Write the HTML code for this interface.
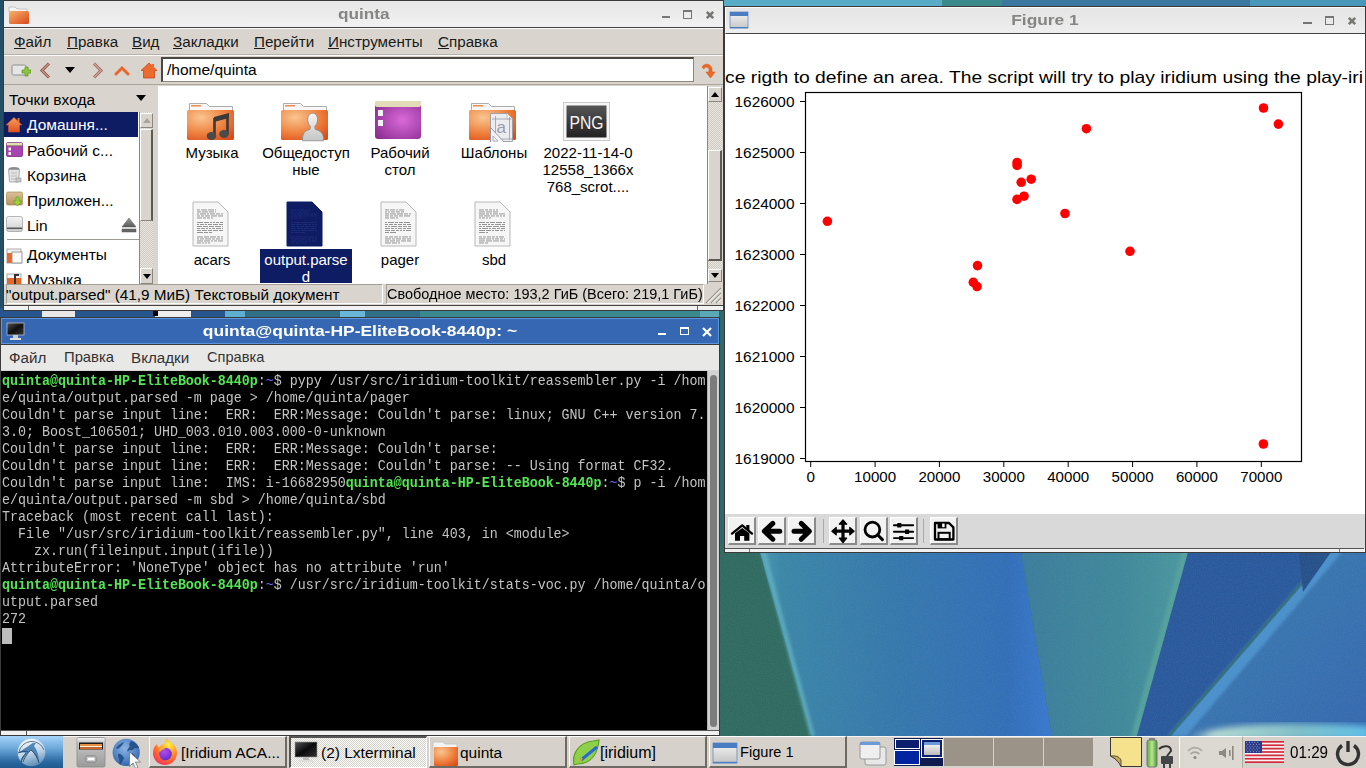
<!DOCTYPE html>
<html><head><meta charset="utf-8">
<style>
*{margin:0;padding:0;box-sizing:border-box}
html,body{width:1366px;height:768px;overflow:hidden;background:#2d6a80;font-family:"Liberation Sans",sans-serif;font-size:13.5px;color:#000}
.a{position:absolute}
.t{position:absolute;white-space:nowrap}
#desk{left:0;top:0;width:1366px;height:768px}
/* file manager */
#fm{left:3px;top:0;width:721px;height:311px;background:#d9d5ce;border:1px solid #3a3a3a}
#fmtitle{left:0;top:0;width:719px;height:27px;background:linear-gradient(#e6e6e6,#f1f1f1);border-bottom:1px solid #404040}
.menu{font-size:15.2px;color:#1a1a1a}
.lbl{position:absolute;width:94px;text-align:center;font-size:15px;line-height:17px;white-space:nowrap}
.menu u{text-decoration:underline;text-underline-offset:1px;text-decoration-thickness:1px}
#term{left:0;top:317px;width:720px;height:419px;background:#000;border:1px solid #3a3a3a}
#fig{left:724px;top:6px;width:642px;height:547px;background:#fff;border:1px solid #3a3a3a}
#task{left:0;top:736px;width:1366px;height:32px;background:#d6d2cb}
.mono{font-family:"Liberation Mono",monospace;font-size:14.2px;line-height:17px;color:#c4c4c4;transform:scaleX(0.9390);transform-origin:0 0}
.g{color:#55e455;font-weight:bold}
.bl{color:#6f6fff}
</style></head><body>
<svg id="desk" class="a" width="1366" height="768" viewBox="0 0 1366 768">
  <defs>
    <linearGradient id="l1" x1="0" y1="0" x2="1" y2="0"><stop offset="0" stop-color="#4a9ab4"/><stop offset="0.08" stop-color="#3a86a8"/><stop offset="0.45" stop-color="#3478ac"/><stop offset="0.85" stop-color="#306eb8"/><stop offset="1" stop-color="#3878d0"/></linearGradient>
    <linearGradient id="l2" x1="0" y1="0" x2="1" y2="0"><stop offset="0" stop-color="#3a7c9c"/><stop offset="0.6" stop-color="#3e889a"/><stop offset="1" stop-color="#4a98a0"/></linearGradient>
    <linearGradient id="l4" x1="0" y1="0" x2="1" y2="1"><stop offset="0" stop-color="#3a80b0"/><stop offset="1" stop-color="#3468b0"/></linearGradient>
    <linearGradient id="pale" x1="0" y1="0" x2="1" y2="0"><stop offset="0" stop-color="#a8d0c8" stop-opacity="0"/><stop offset="0.15" stop-color="#b8dcd4"/><stop offset="0.6" stop-color="#80c0c8"/><stop offset="1" stop-color="#5cc0ea"/></linearGradient>
    <filter id="blur1"><feGaussianBlur stdDeviation="1.5"/></filter>
    <filter id="blur3"><feGaussianBlur stdDeviation="3"/></filter>
  </defs>
  <rect width="1366" height="768" fill="#2d6874"/>
  <rect x="0" y="0" width="4" height="320" fill="#244e66"/>
  <!-- mid strip -->
  <rect x="0" y="308" width="720" height="12" fill="#2f7088"/>
  <rect x="0" y="308" width="230" height="12" fill="#27568e"/>
  <rect x="225" y="308" width="20" height="12" fill="#5eaed0"/>
  <rect x="340" y="308" width="25" height="12" fill="#6ab6d8"/>
  <rect x="420" y="308" width="290" height="12" fill="#3a8890"/>
  <rect x="700" y="308" width="25" height="12" fill="#5aa8b8"/>
  <rect x="42" y="311" width="33" height="6" fill="#e8e8e8"/>
  <rect x="155" y="311" width="36" height="6" fill="#eeeeee"/>
  <rect x="153" y="311" width="5" height="5" fill="#000"/>
  <!-- between term and fig -->
  <rect x="719" y="300" width="7" height="260" fill="#2e6a6a"/>
  <!-- top strip -->
  <rect x="724" y="0" width="642" height="8" fill="#3a78a0"/>
  <rect x="724" y="0" width="218" height="8" fill="#58acc8"/>
  <rect x="942" y="0" width="60" height="8" fill="#3a8a8c"/>
  <rect x="1250" y="0" width="116" height="8" fill="#4896b8"/>
  <!-- bottom right leaves -->
  <rect x="719" y="545" width="647" height="192" fill="#2e6a60"/>
  <polygon points="758,545 1020,545 1052,736 812,736" fill="url(#l1)"/>
  <polygon points="759,545 764,545 815,736 810,736" fill="#62b4c4" opacity="0.75" filter="url(#blur1)"/>
  <polygon points="1020,545 1190,545 1137,736 1052,736" fill="url(#l2)"/>
  <polygon points="1184,545 1191,545 1138,736 1131,736" fill="#52a09c" filter="url(#blur1)"/>
  <polygon points="1190,545 1366,545 1366,736 1137,736" fill="#28589c"/>
  <polygon points="1340,545 1366,545 1366,736 1172,736" fill="url(#l4)"/>
  <polygon points="1334,545 1348,545 1186,736 1168,736" fill="#4a90cc" filter="url(#blur1)"/>
  <polygon points="1333,545 1337,545 1171,736 1167,736" fill="#2e6a70" opacity="0.8"/>
  <polygon points="1298,545 1336,545 1303,592" fill="#24508a"/>
  <g filter="url(#blur3)"><path d="M1185 738C1220 722 1300 722 1370 726V740H1185z" fill="url(#pale)"/></g>
  <filter id="noise" x="0" y="0" width="100%" height="100%"><feTurbulence type="fractalNoise" baseFrequency="0.9" numOctaves="2" seed="4"/><feColorMatrix values="0 0 0 0 0.5  0 0 0 0 0.5  0 0 0 0 0.5  0 0 0 0.9 -0.25"/></filter>
  <rect x="719" y="545" width="647" height="192" filter="url(#noise)" opacity="0.18"/>
</svg>

<!-- FILE MANAGER -->
<div id="fm" class="a">
  <div id="fmtitle" class="a">
    <svg class="a" style="left:4px;top:4px" width="22" height="20" viewBox="0 0 22 20">
      <defs><linearGradient id="fold" x1="0" y1="0" x2="1" y2="1"><stop offset="0" stop-color="#f7b26a"/><stop offset="1" stop-color="#d9481a"/></linearGradient></defs>
      <path d="M1 2 h6 l2 2 h10 v3 H1z" fill="#f4f4f4" stroke="#b9b9b9" stroke-width="0.8"/>
      <rect x="1" y="6" width="20" height="13" rx="1.5" fill="url(#fold)"/>
    </svg>
    <div class="t" style="left:334px;top:4px;font-weight:bold;font-size:15.5px;color:#858583;transform:scaleX(1.11);transform-origin:0 0">quinta</div>
    <div class="a" style="left:658px;top:15px;width:8px;height:2px;background:#767672"></div>
    <div class="a" style="left:679px;top:9px;width:9px;height:9px;border:1.5px solid #767672;border-top-width:2px"></div>
    <svg class="a" style="left:701px;top:9px" width="10" height="10"><path d="M1.8 1.8L8.2 8.2M8.2 1.8L1.8 8.2" stroke="#767672" stroke-width="2.6"/></svg>
  </div>
  <!-- menubar -->
  <div class="a" style="left:0;top:27px;width:719px;height:27px;background:#d9d5ce;border-bottom:1px solid #b8b3aa;border-top:1px solid #fbfaf9"></div>
  <div class="t menu" style="left:10px;top:32px"><u>Ф</u>айл</div>
  <div class="t menu" style="left:63px;top:32px"><u>П</u>равка</div>
  <div class="t menu" style="left:128px;top:32px"><u>В</u>ид</div>
  <div class="t menu" style="left:169px;top:32px"><u>З</u>акладки</div>
  <div class="t menu" style="left:250px;top:32px"><u>П</u>ерейти</div>
  <div class="t menu" style="left:324px;top:32px"><u>И</u>нструменты</div>
  <div class="t menu" style="left:434px;top:32px"><u>С</u>правка</div>
  <!-- toolbar -->
  <div class="a" style="left:0;top:54px;width:719px;height:30px;background:#d9d5ce;border-top:1px solid #fbfaf9;border-bottom:1px solid #aaa49b"></div>
  <svg class="a" style="left:7px;top:61px" width="20" height="18" viewBox="0 0 20 18">
    <rect x="1" y="3" width="14" height="10" rx="1.5" fill="#e6e6e6" stroke="#8e8e8e"/>
    <path d="M12 9h3V6h3v3h3v3h-3v3h-3v-3h-3z" transform="translate(-1,-1)" fill="#8cc63f" stroke="#5f9a2a" stroke-width="0.8"/>
  </svg>
  <svg class="a" style="left:35px;top:61px" width="12" height="17" viewBox="0 0 12 17"><path d="M10 1.5L3 8.5L10 15.5" fill="none" stroke="#9a5a48" stroke-width="3"/><path d="M10 1.5L3 8.5L10 15.5" fill="none" stroke="#d8c8c0" stroke-width="0.9"/></svg>
  <svg class="a" style="left:61px;top:66px" width="10" height="6"><path d="M0 0h10L5 6z" fill="#000"/></svg>
  <svg class="a" style="left:88px;top:61px" width="12" height="17" viewBox="0 0 12 17"><path d="M2 1.5L9 8.5L2 15.5" fill="none" stroke="#a87060" stroke-width="3"/><path d="M2 1.5L9 8.5L2 15.5" fill="none" stroke="#e0d4cc" stroke-width="0.9"/></svg>
  <svg class="a" style="left:110px;top:64px" width="16" height="11"><path d="M2 9L8 3L14 9" fill="none" stroke="#e8662a" stroke-width="3" stroke-linecap="round"/></svg>
  <svg class="a" style="left:136px;top:61px" width="18" height="17" viewBox="0 0 18 17"><path d="M9 1L17 8.5h-2.5V16h-11V8.5H1z" fill="#ec6a2e" stroke="#c8471a" stroke-width="0.8"/><rect x="12" y="2" width="2" height="4" fill="#ec6a2e"/></svg>
  <div class="a" style="left:157px;top:56px;width:533px;height:25px;background:#fff;border:1px solid #8d877e;border-top:2px solid #4b4741;border-left:2px solid #4b4741"></div>
  <div class="t" style="left:163px;top:60px;font-size:15.5px;color:#000">/home/quinta</div>
  <svg class="a" style="left:695px;top:61px" width="18" height="18" viewBox="0 0 18 18"><path d="M3 5C5 1 12 1 13 7L13 10L16 10L11.5 16L7 10L10 10L10 7C9.5 5 6 4 5 7z" fill="#ea6a28" stroke="#d8551c" stroke-width="0.6"/></svg>
  <!-- sidebar -->
  <div class="a" style="left:0;top:84px;width:155px;height:200px;background:#d9d5ce"></div>
  <div class="t" style="left:5px;top:90px;font-size:15.5px">Точки входа</div>
  <svg class="a" style="left:132px;top:94px" width="10" height="6"><path d="M0 0h10L5 6z" fill="#000"/></svg>
  <div class="a" style="left:0;top:111px;width:136px;height:173px;background:#fff"></div>
  <div class="a" style="left:0;top:111px;width:134px;height:25px;background:#0d1c63"></div>
  <div class="t" style="left:23px;top:115px;font-size:15.5px;color:#fff">Домашня...</div>
  <div class="t" style="left:23px;top:141px;font-size:15.5px">Рабочий с...</div>
  <div class="t" style="left:23px;top:166px;font-size:15.5px">Корзина</div>
  <div class="t" style="left:23px;top:191px;font-size:15.5px">Приложен...</div>
  <div class="t" style="left:23px;top:216px;font-size:15.5px">Lin</div>
  <div class="a" style="left:3px;top:238px;width:132px;height:1px;background:#9f9a92"></div>
  <div class="t" style="left:23px;top:245px;font-size:15.5px">Документы</div>
  <div class="t" style="left:23px;top:270px;font-size:15.5px;clip-path:inset(0 0 3px 0)">Музыка</div>
  <!-- sidebar icons -->
  <svg class="a" style="left:1px;top:115px" width="18" height="17" viewBox="0 0 18 17"><defs><linearGradient id="hg" x1="0" y1="0" x2="0" y2="1"><stop offset="0" stop-color="#f8a060"/><stop offset="1" stop-color="#e0501c"/></linearGradient></defs><path d="M9 1.5L17 9h-2.5V16h-11V9H1z" fill="url(#hg)" stroke="#d05a20" stroke-width="0.6"/><rect x="12.5" y="2" width="2" height="4" fill="#e8702e"/></svg>
  <svg class="a" style="left:2px;top:141px" width="17" height="15" viewBox="0 0 17 15"><rect x="0.5" y="0.5" width="16" height="14" rx="1.5" fill="#a844b0" stroke="#7a2a80" stroke-width="0.8"/><rect x="0.8" y="0.8" width="15.4" height="3" fill="#e4dcb4"/><rect x="0.8" y="3.5" width="15.4" height="0.7" fill="#6a6a40"/><rect x="2.5" y="5.5" width="2.5" height="3" fill="#f4f4f4"/><rect x="2.5" y="10" width="2.5" height="3" fill="#f4f4f4"/></svg>
  <svg class="a" style="left:3px;top:165px" width="15" height="17" viewBox="0 0 15 17"><ellipse cx="7" cy="3" rx="5.5" ry="2" fill="#8a8a8a"/><path d="M1.5 3.5h11l-1 12.5h-9z" fill="#e2e2e2" stroke="#9a9a9a" stroke-width="0.8"/><path d="M4 7h6M4 10h6M4 13h6" stroke="#b4b4b4" stroke-width="0.8"/><rect x="9" y="12" width="5" height="4" fill="#c8c8c8" stroke="#888" stroke-width="0.5"/></svg>
  <svg class="a" style="left:2px;top:190px" width="17" height="16" viewBox="0 0 17 16"><defs><linearGradient id="pkg" x1="0" y1="0" x2="0" y2="1"><stop offset="0" stop-color="#dcc298"/><stop offset="1" stop-color="#b8925c"/></linearGradient></defs><rect x="0.5" y="1" width="16" height="13" rx="1.5" fill="url(#pkg)" stroke="#9a7a4a" stroke-width="0.6"/><path d="M10 6v4h-3l4.5 5 4.5-5h-3V6z" fill="#9ed03a" stroke="#5a9a2a" stroke-width="0.6"/></svg>
  <svg class="a" style="left:2px;top:215px" width="17" height="16" viewBox="0 0 17 16"><defs><linearGradient id="drv" x1="0" y1="0" x2="0" y2="1"><stop offset="0" stop-color="#f4f4f4"/><stop offset="1" stop-color="#d0d0d0"/></linearGradient></defs><rect x="0.5" y="0.5" width="16" height="15" rx="2" fill="url(#drv)" stroke="#9a9a9a" stroke-width="0.7"/><rect x="1" y="11.5" width="15" height="1.6" fill="#5a5a5a"/></svg>
  <svg class="a" style="left:117px;top:215px" width="16" height="17" viewBox="0 0 16 17"><defs><linearGradient id="ej" x1="0" y1="0" x2="0" y2="1"><stop offset="0" stop-color="#9a9a9a"/><stop offset="1" stop-color="#5a5a5a"/></linearGradient></defs><path d="M1 11L8 2L15 11z" fill="url(#ej)" stroke="#555" stroke-width="0.5"/><rect x="1" y="13" width="14" height="3" fill="#666" stroke="#555" stroke-width="0.5"/></svg>
  <svg class="a" style="left:2px;top:246px" width="18" height="17"><rect x="1" y="2" width="14" height="14" fill="#f3f3f3" stroke="#aaa"/><rect x="1" y="6" width="8" height="10" fill="#e46a2a"/><rect x="6" y="5" width="10" height="11" fill="#fafafa" stroke="#999"/></svg>
  <svg class="a" style="left:2px;top:271px" width="18" height="13"><rect x="1" y="2" width="14" height="12" fill="#f3f3f3" stroke="#aaa"/><rect x="1" y="6" width="14" height="8" fill="#e46a2a"/><path d="M9 12V3h4" stroke="#333" stroke-width="2" fill="none"/></svg>
  <!-- sidebar scrollbar -->
  <div class="a" style="left:135px;top:111px;width:15px;height:173px;background:repeating-conic-gradient(#cfcac2 0 25%,#e8e5e0 0 50%) 0 0/2px 2px;border-left:1px solid #8c877e"></div>
  <div class="a" style="left:136px;top:112px;width:13px;height:15px;background:#d9d5ce;border:1px solid #fff;border-right-color:#8c877e;border-bottom-color:#8c877e"></div>
  <svg class="a" style="left:139px;top:117px" width="8" height="5"><path d="M0 5h8L4 0z" fill="#a8a39b"/></svg>
  <div class="a" style="left:136px;top:128px;width:13px;height:92px;background:#d9d5ce;border:1px solid #fff;border-right:2px solid #5d5953;border-bottom-color:#8c877e"></div>
  <div class="a" style="left:136px;top:267px;width:13px;height:16px;background:#d9d5ce;border:1px solid #fff;border-right-color:#8c877e;border-bottom-color:#8c877e"></div>
  <svg class="a" style="left:139px;top:273px" width="8" height="5"><path d="M0 0h8L4 5z" fill="#000"/></svg>
  <!-- pane separator -->
  <div class="a" style="left:149px;top:84px;width:6px;height:200px;background:#d9d5ce"></div>
  <!-- icon view -->
  <div class="a" style="left:154px;top:85px;width:550px;height:199px;background:#fff"></div>
  <!-- right scrollbar -->
  <div class="a" style="left:703px;top:85px;width:16px;height:199px;background:#d9d5ce;border-left:1px solid #8c877e"></div>
  <div class="a" style="left:704px;top:86px;width:14px;height:15px;background:#d9d5ce;border:1px solid #fff;border-right-color:#8c877e;border-bottom-color:#8c877e"></div>
  <svg class="a" style="left:707px;top:91px" width="8" height="5"><path d="M0 5h8L4 0z" fill="#000"/></svg>
  <div class="a" style="left:704px;top:101px;width:14px;height:167px;background:repeating-conic-gradient(#cfcac2 0 25%,#e8e5e0 0 50%) 0 0/2px 2px"></div>
  <div class="a" style="left:704px;top:149px;width:14px;height:111px;background:#d9d5ce;border:1px solid #fff;border-right:2px solid #5d5953;border-bottom:2px solid #5d5953"></div>
  <div class="a" style="left:704px;top:268px;width:14px;height:13px;background:#d9d5ce;border:1px solid #fff;border-right-color:#8c877e;border-bottom-color:#8c877e"></div>
  <svg class="a" style="left:707px;top:272px" width="8" height="5"><path d="M0 0h8L4 5z" fill="#000"/></svg>
  <!-- icons -->
  <svg width="0" height="0" class="a"><defs><radialGradient id="fbody" cx="0.3" cy="0.25" r="0.9"><stop offset="0" stop-color="#f9c590"/><stop offset="0.6" stop-color="#ee7f3c"/><stop offset="1" stop-color="#d84f1c"/></radialGradient></defs></svg><svg class="a" style="left:183px;top:101px" width="48" height="40" viewBox="0 0 48 40">
    <path d="M2.5 1.5h17l3 3h23v8H2.5z" fill="#f7f7f7" stroke="#a4a4a4" stroke-width="0.9"/><rect x="4" y="3" width="10" height="1.5" fill="#f08a50"/>
    <rect x="0" y="8" width="47" height="30" rx="1.5" fill="url(#fbody)"/><path d="M27 15L42 11V16L27 20z" fill="#3a3a3a"/><path d="M27.5 16V34M40.5 12V32" stroke="#3a3a3a" stroke-width="2.6"/><ellipse cx="24.5" cy="34" rx="4.8" ry="4" fill="#4a4a4a"/><ellipse cx="37" cy="32" rx="4.8" ry="4" fill="#4a4a4a"/></svg><svg class="a" style="left:277px;top:101px" width="48" height="40" viewBox="0 0 48 40">
    <path d="M2.5 1.5h17l3 3h23v8H2.5z" fill="#f7f7f7" stroke="#a4a4a4" stroke-width="0.9"/><rect x="4" y="3" width="10" height="1.5" fill="#f08a50"/>
    <rect x="0" y="8" width="47" height="30" rx="1.5" fill="url(#fbody)"/><defs><linearGradient id="prs" x1="0" y1="0" x2="0" y2="1"><stop offset="0" stop-color="#f6f6f6"/><stop offset="1" stop-color="#c4c4c4"/></linearGradient></defs><path d="M21.5 38.8C21.3 31 24 28.6 29 27.4L29.5 24.5C27.5 22.5 26.7 20 26.7 17.5C26.7 13.5 29 11.2 31.6 11.2S36.5 13.5 36.5 17.5C36.5 20 35.7 22.5 33.7 24.5L34.2 27.4C39.2 28.6 42.9 31 42.7 38.8z" fill="url(#prs)" stroke="#8a8a8a" stroke-width="0.8"/></svg><svg class="a" style="left:370px;top:99px" width="48" height="40" viewBox="0 0 48 40"><defs><radialGradient id="purp" cx="0.6" cy="0.5" r="0.7"><stop offset="0" stop-color="#d86ad8"/><stop offset="1" stop-color="#8e2e94"/></radialGradient></defs><rect x="1" y="1" width="46" height="38" rx="3" fill="url(#purp)"/><rect x="1" y="1" width="46" height="6" rx="2" fill="#e2dcb8"/><rect x="4" y="10" width="5" height="6" fill="#f2f2f2"/><rect x="4" y="20" width="5" height="6" fill="#f2f2f2"/></svg><svg class="a" style="left:465px;top:101px" width="48" height="40" viewBox="0 0 48 40">
    <path d="M2.5 1.5h17l3 3h23v8H2.5z" fill="#f7f7f7" stroke="#a4a4a4" stroke-width="0.9"/><rect x="4" y="3" width="10" height="1.5" fill="#f08a50"/>
    <rect x="0" y="8" width="47" height="30" rx="1.5" fill="url(#fbody)"/><path d="M21.5 11.5H38L43.5 17V39.5H21.5z" fill="#ececee" stroke="#9a9aa6" stroke-width="0.9"/><path d="M38 11.5V17H43.5" fill="#fafafa" stroke="#b0b0b8" stroke-width="0.6"/><path d="M26.5 14V39M40.5 15V38M23 17H42M23 37H43" stroke="#9a9aae" stroke-width="0.8"/><text x="27.5" y="30.5" font-size="17" fill="#9a9ab0" font-family="Liberation Sans">a</text><path d="M21.5 25.5V41.5H36.5z" fill="#f2f2f4" stroke="#8e8e9a" stroke-width="0.9"/><path d="M24 34V39H29z" fill="none" stroke="#9a9aae" stroke-width="0.7"/></svg><svg class="a" style="left:559px;top:101px" width="48" height="40" viewBox="0 0 48 40"><defs><linearGradient id="pngg" x1="0" y1="0" x2="0" y2="1"><stop offset="0" stop-color="#555"/><stop offset="1" stop-color="#222"/></linearGradient></defs><rect x="0.5" y="0.5" width="46" height="38" fill="#f6f6f6" stroke="#c8c8c8"/><rect x="3.5" y="3.5" width="40" height="32" fill="url(#pngg)"/><text x="6.5" y="26.5" font-size="17.5" fill="#f4f4f4" font-family="Liberation Sans" textLength="34" lengthAdjust="spacingAndGlyphs">PNG</text></svg><svg class="a" style="left:188px;top:200px" width="38" height="46" viewBox="0 0 38 46">
    <path d="M1 1h25l10 10v34H1z" fill="#f6f6f6" stroke="#b8b8b8"/>
    <g fill="#8a8a8a"><rect x="5" y="8.5" width="3" height="0.9"/><rect x="9" y="8.5" width="6" height="0.9"/><rect x="16" y="8.5" width="6" height="0.9"/><rect x="23" y="8.5" width="1" height="0.9"/><rect x="5" y="10.5" width="4" height="0.9"/><rect x="10" y="10.5" width="6" height="0.9"/><rect x="17" y="10.5" width="5" height="0.9"/><rect x="23" y="10.5" width="1" height="0.9"/><rect x="5" y="12.5" width="2" height="0.9"/><rect x="8" y="12.5" width="6" height="0.9"/><rect x="15" y="12.5" width="2" height="0.9"/><rect x="18" y="12.5" width="5" height="0.9"/><rect x="24" y="12.5" width="4" height="0.9"/><rect x="29" y="12.5" width="2" height="0.9"/><rect x="5" y="14.5" width="3" height="0.9"/><rect x="9" y="14.5" width="3" height="0.9"/><rect x="13" y="14.5" width="5" height="0.9"/><rect x="19" y="14.5" width="6" height="0.9"/><rect x="26" y="14.5" width="5" height="0.9"/><rect x="5" y="16.5" width="5" height="0.9"/><rect x="11" y="16.5" width="3" height="0.9"/><rect x="15" y="16.5" width="3" height="0.9"/><rect x="19" y="16.5" width="2" height="0.9"/><rect x="5" y="21.0" width="6" height="0.9"/><rect x="12" y="21.0" width="5" height="0.9"/><rect x="18" y="21.0" width="2" height="0.9"/><rect x="21" y="21.0" width="2" height="0.9"/><rect x="24" y="21.0" width="3" height="0.9"/><rect x="28" y="21.0" width="3" height="0.9"/><rect x="5" y="23.0" width="2" height="0.9"/><rect x="8" y="23.0" width="4" height="0.9"/><rect x="13" y="23.0" width="2" height="0.9"/><rect x="16" y="23.0" width="4" height="0.9"/><rect x="21" y="23.0" width="5" height="0.9"/><rect x="27" y="23.0" width="4" height="0.9"/><rect x="5" y="25.0" width="5" height="0.9"/><rect x="11" y="25.0" width="5" height="0.9"/><rect x="17" y="25.0" width="5" height="0.9"/><rect x="23" y="25.0" width="6" height="0.9"/><rect x="30" y="25.0" width="1" height="0.9"/><rect x="5" y="27.0" width="3" height="0.9"/><rect x="9" y="27.0" width="4" height="0.9"/><rect x="14" y="27.0" width="2" height="0.9"/><rect x="17" y="27.0" width="2" height="0.9"/><rect x="20" y="27.0" width="3" height="0.9"/><rect x="24" y="27.0" width="5" height="0.9"/><rect x="30" y="27.0" width="1" height="0.9"/><rect x="5" y="29.0" width="4" height="0.9"/><rect x="10" y="29.0" width="5" height="0.9"/><rect x="16" y="29.0" width="4" height="0.9"/><rect x="21" y="29.0" width="5" height="0.9"/><rect x="27" y="29.0" width="4" height="0.9"/><rect x="5" y="31.0" width="6" height="0.9"/><rect x="12" y="31.0" width="4" height="0.9"/><rect x="17" y="31.0" width="3" height="0.9"/><rect x="5" y="35.5" width="6" height="0.9"/><rect x="12" y="35.5" width="5" height="0.9"/><rect x="18" y="35.5" width="6" height="0.9"/><rect x="25" y="35.5" width="3" height="0.9"/><rect x="29" y="35.5" width="2" height="0.9"/><rect x="5" y="37.5" width="2" height="0.9"/><rect x="8" y="37.5" width="4" height="0.9"/><rect x="13" y="37.5" width="6" height="0.9"/><rect x="20" y="37.5" width="3" height="0.9"/><rect x="24" y="37.5" width="4" height="0.9"/><rect x="29" y="37.5" width="2" height="0.9"/><rect x="5" y="39.5" width="6" height="0.9"/><rect x="12" y="39.5" width="6" height="0.9"/><rect x="19" y="39.5" width="2" height="0.9"/><rect x="22" y="39.5" width="3" height="0.9"/><rect x="26" y="39.5" width="5" height="0.9"/><rect x="5" y="41.5" width="4" height="0.9"/><rect x="10" y="41.5" width="2" height="0.9"/><rect x="13" y="41.5" width="2" height="0.9"/><rect x="16" y="41.5" width="2" height="0.9"/></g></svg><svg class="a" style="left:282px;top:200px" width="38" height="46" viewBox="0 0 38 46">
    <path d="M1 1h25l10 10v34H1z" fill="#0d1c63" stroke="#0d1c63"/>
    <g fill="#1e2e78"><rect x="5" y="8.5" width="5" height="0.9"/><rect x="11" y="8.5" width="2" height="0.9"/><rect x="14" y="8.5" width="4" height="0.9"/><rect x="19" y="8.5" width="2" height="0.9"/><rect x="22" y="8.5" width="2" height="0.9"/><rect x="5" y="10.5" width="3" height="0.9"/><rect x="9" y="10.5" width="2" height="0.9"/><rect x="12" y="10.5" width="4" height="0.9"/><rect x="17" y="10.5" width="5" height="0.9"/><rect x="23" y="10.5" width="1" height="0.9"/><rect x="5" y="12.5" width="2" height="0.9"/><rect x="8" y="12.5" width="2" height="0.9"/><rect x="11" y="12.5" width="6" height="0.9"/><rect x="18" y="12.5" width="6" height="0.9"/><rect x="25" y="12.5" width="2" height="0.9"/><rect x="28" y="12.5" width="3" height="0.9"/><rect x="5" y="14.5" width="6" height="0.9"/><rect x="12" y="14.5" width="4" height="0.9"/><rect x="17" y="14.5" width="6" height="0.9"/><rect x="24" y="14.5" width="4" height="0.9"/><rect x="29" y="14.5" width="2" height="0.9"/><rect x="5" y="16.5" width="2" height="0.9"/><rect x="8" y="16.5" width="4" height="0.9"/><rect x="13" y="16.5" width="2" height="0.9"/><rect x="16" y="16.5" width="1" height="0.9"/><rect x="5" y="21.0" width="2" height="0.9"/><rect x="8" y="21.0" width="6" height="0.9"/><rect x="15" y="21.0" width="6" height="0.9"/><rect x="22" y="21.0" width="2" height="0.9"/><rect x="25" y="21.0" width="3" height="0.9"/><rect x="29" y="21.0" width="2" height="0.9"/><rect x="5" y="23.0" width="4" height="0.9"/><rect x="10" y="23.0" width="6" height="0.9"/><rect x="17" y="23.0" width="4" height="0.9"/><rect x="22" y="23.0" width="3" height="0.9"/><rect x="26" y="23.0" width="2" height="0.9"/><rect x="29" y="23.0" width="2" height="0.9"/><rect x="5" y="25.0" width="4" height="0.9"/><rect x="10" y="25.0" width="4" height="0.9"/><rect x="15" y="25.0" width="3" height="0.9"/><rect x="19" y="25.0" width="5" height="0.9"/><rect x="25" y="25.0" width="5" height="0.9"/><rect x="5" y="27.0" width="5" height="0.9"/><rect x="11" y="27.0" width="6" height="0.9"/><rect x="18" y="27.0" width="5" height="0.9"/><rect x="24" y="27.0" width="6" height="0.9"/><rect x="5" y="29.0" width="6" height="0.9"/><rect x="12" y="29.0" width="2" height="0.9"/><rect x="15" y="29.0" width="6" height="0.9"/><rect x="22" y="29.0" width="6" height="0.9"/><rect x="29" y="29.0" width="2" height="0.9"/><rect x="5" y="31.0" width="3" height="0.9"/><rect x="9" y="31.0" width="4" height="0.9"/><rect x="14" y="31.0" width="5" height="0.9"/><rect x="5" y="35.5" width="4" height="0.9"/><rect x="10" y="35.5" width="6" height="0.9"/><rect x="17" y="35.5" width="4" height="0.9"/><rect x="22" y="35.5" width="6" height="0.9"/><rect x="29" y="35.5" width="2" height="0.9"/><rect x="5" y="37.5" width="2" height="0.9"/><rect x="8" y="37.5" width="5" height="0.9"/><rect x="14" y="37.5" width="6" height="0.9"/><rect x="21" y="37.5" width="4" height="0.9"/><rect x="26" y="37.5" width="2" height="0.9"/><rect x="29" y="37.5" width="2" height="0.9"/><rect x="5" y="39.5" width="6" height="0.9"/><rect x="12" y="39.5" width="6" height="0.9"/><rect x="19" y="39.5" width="3" height="0.9"/><rect x="23" y="39.5" width="2" height="0.9"/><rect x="26" y="39.5" width="4" height="0.9"/><rect x="5" y="41.5" width="4" height="0.9"/><rect x="10" y="41.5" width="4" height="0.9"/><rect x="15" y="41.5" width="6" height="0.9"/></g></svg><svg class="a" style="left:376px;top:200px" width="38" height="46" viewBox="0 0 38 46">
    <path d="M1 1h25l10 10v34H1z" fill="#f6f6f6" stroke="#b8b8b8"/>
    <g fill="#8a8a8a"><rect x="5" y="8.5" width="4" height="0.9"/><rect x="10" y="8.5" width="5" height="0.9"/><rect x="16" y="8.5" width="2" height="0.9"/><rect x="19" y="8.5" width="5" height="0.9"/><rect x="5" y="10.5" width="2" height="0.9"/><rect x="8" y="10.5" width="2" height="0.9"/><rect x="11" y="10.5" width="4" height="0.9"/><rect x="16" y="10.5" width="4" height="0.9"/><rect x="21" y="10.5" width="3" height="0.9"/><rect x="5" y="12.5" width="4" height="0.9"/><rect x="10" y="12.5" width="6" height="0.9"/><rect x="17" y="12.5" width="6" height="0.9"/><rect x="24" y="12.5" width="4" height="0.9"/><rect x="29" y="12.5" width="2" height="0.9"/><rect x="5" y="14.5" width="4" height="0.9"/><rect x="10" y="14.5" width="3" height="0.9"/><rect x="14" y="14.5" width="4" height="0.9"/><rect x="19" y="14.5" width="4" height="0.9"/><rect x="24" y="14.5" width="6" height="0.9"/><rect x="5" y="16.5" width="4" height="0.9"/><rect x="10" y="16.5" width="5" height="0.9"/><rect x="16" y="16.5" width="2" height="0.9"/><rect x="5" y="21.0" width="2" height="0.9"/><rect x="8" y="21.0" width="6" height="0.9"/><rect x="15" y="21.0" width="3" height="0.9"/><rect x="19" y="21.0" width="4" height="0.9"/><rect x="24" y="21.0" width="6" height="0.9"/><rect x="5" y="23.0" width="3" height="0.9"/><rect x="9" y="23.0" width="4" height="0.9"/><rect x="14" y="23.0" width="3" height="0.9"/><rect x="18" y="23.0" width="4" height="0.9"/><rect x="23" y="23.0" width="3" height="0.9"/><rect x="27" y="23.0" width="4" height="0.9"/><rect x="5" y="25.0" width="2" height="0.9"/><rect x="8" y="25.0" width="2" height="0.9"/><rect x="11" y="25.0" width="6" height="0.9"/><rect x="18" y="25.0" width="4" height="0.9"/><rect x="23" y="25.0" width="4" height="0.9"/><rect x="28" y="25.0" width="3" height="0.9"/><rect x="5" y="27.0" width="5" height="0.9"/><rect x="11" y="27.0" width="3" height="0.9"/><rect x="15" y="27.0" width="2" height="0.9"/><rect x="18" y="27.0" width="4" height="0.9"/><rect x="23" y="27.0" width="3" height="0.9"/><rect x="27" y="27.0" width="4" height="0.9"/><rect x="5" y="29.0" width="5" height="0.9"/><rect x="11" y="29.0" width="4" height="0.9"/><rect x="16" y="29.0" width="3" height="0.9"/><rect x="20" y="29.0" width="2" height="0.9"/><rect x="23" y="29.0" width="2" height="0.9"/><rect x="26" y="29.0" width="5" height="0.9"/><rect x="5" y="31.0" width="4" height="0.9"/><rect x="10" y="31.0" width="6" height="0.9"/><rect x="5" y="35.5" width="3" height="0.9"/><rect x="9" y="35.5" width="4" height="0.9"/><rect x="14" y="35.5" width="4" height="0.9"/><rect x="19" y="35.5" width="2" height="0.9"/><rect x="22" y="35.5" width="6" height="0.9"/><rect x="29" y="35.5" width="2" height="0.9"/><rect x="5" y="37.5" width="6" height="0.9"/><rect x="12" y="37.5" width="3" height="0.9"/><rect x="16" y="37.5" width="5" height="0.9"/><rect x="22" y="37.5" width="4" height="0.9"/><rect x="27" y="37.5" width="4" height="0.9"/><rect x="5" y="39.5" width="4" height="0.9"/><rect x="10" y="39.5" width="5" height="0.9"/><rect x="16" y="39.5" width="4" height="0.9"/><rect x="21" y="39.5" width="5" height="0.9"/><rect x="27" y="39.5" width="4" height="0.9"/><rect x="5" y="41.5" width="6" height="0.9"/><rect x="12" y="41.5" width="5" height="0.9"/><rect x="18" y="41.5" width="2" height="0.9"/></g></svg><svg class="a" style="left:470px;top:200px" width="38" height="46" viewBox="0 0 38 46">
    <path d="M1 1h25l10 10v34H1z" fill="#f6f6f6" stroke="#b8b8b8"/>
    <g fill="#8a8a8a"><rect x="5" y="8.5" width="5" height="0.9"/><rect x="11" y="8.5" width="3" height="0.9"/><rect x="15" y="8.5" width="3" height="0.9"/><rect x="19" y="8.5" width="2" height="0.9"/><rect x="22" y="8.5" width="2" height="0.9"/><rect x="5" y="10.5" width="6" height="0.9"/><rect x="12" y="10.5" width="6" height="0.9"/><rect x="19" y="10.5" width="5" height="0.9"/><rect x="5" y="12.5" width="6" height="0.9"/><rect x="12" y="12.5" width="3" height="0.9"/><rect x="16" y="12.5" width="2" height="0.9"/><rect x="19" y="12.5" width="5" height="0.9"/><rect x="25" y="12.5" width="6" height="0.9"/><rect x="5" y="14.5" width="4" height="0.9"/><rect x="10" y="14.5" width="6" height="0.9"/><rect x="17" y="14.5" width="4" height="0.9"/><rect x="22" y="14.5" width="3" height="0.9"/><rect x="26" y="14.5" width="2" height="0.9"/><rect x="29" y="14.5" width="2" height="0.9"/><rect x="5" y="16.5" width="2" height="0.9"/><rect x="8" y="16.5" width="3" height="0.9"/><rect x="12" y="16.5" width="2" height="0.9"/><rect x="15" y="16.5" width="2" height="0.9"/><rect x="5" y="21.0" width="6" height="0.9"/><rect x="12" y="21.0" width="3" height="0.9"/><rect x="16" y="21.0" width="5" height="0.9"/><rect x="22" y="21.0" width="6" height="0.9"/><rect x="29" y="21.0" width="2" height="0.9"/><rect x="5" y="23.0" width="2" height="0.9"/><rect x="8" y="23.0" width="5" height="0.9"/><rect x="14" y="23.0" width="2" height="0.9"/><rect x="17" y="23.0" width="3" height="0.9"/><rect x="21" y="23.0" width="6" height="0.9"/><rect x="28" y="23.0" width="3" height="0.9"/><rect x="5" y="25.0" width="3" height="0.9"/><rect x="9" y="25.0" width="2" height="0.9"/><rect x="12" y="25.0" width="6" height="0.9"/><rect x="19" y="25.0" width="6" height="0.9"/><rect x="26" y="25.0" width="5" height="0.9"/><rect x="5" y="27.0" width="2" height="0.9"/><rect x="8" y="27.0" width="6" height="0.9"/><rect x="15" y="27.0" width="2" height="0.9"/><rect x="18" y="27.0" width="4" height="0.9"/><rect x="23" y="27.0" width="3" height="0.9"/><rect x="27" y="27.0" width="4" height="0.9"/><rect x="5" y="29.0" width="6" height="0.9"/><rect x="12" y="29.0" width="5" height="0.9"/><rect x="18" y="29.0" width="2" height="0.9"/><rect x="21" y="29.0" width="4" height="0.9"/><rect x="26" y="29.0" width="3" height="0.9"/><rect x="30" y="29.0" width="1" height="0.9"/><rect x="5" y="31.0" width="6" height="0.9"/><rect x="12" y="31.0" width="2" height="0.9"/><rect x="5" y="35.5" width="3" height="0.9"/><rect x="9" y="35.5" width="3" height="0.9"/><rect x="13" y="35.5" width="4" height="0.9"/><rect x="18" y="35.5" width="3" height="0.9"/><rect x="22" y="35.5" width="2" height="0.9"/><rect x="25" y="35.5" width="5" height="0.9"/><rect x="5" y="37.5" width="6" height="0.9"/><rect x="12" y="37.5" width="5" height="0.9"/><rect x="18" y="37.5" width="2" height="0.9"/><rect x="21" y="37.5" width="4" height="0.9"/><rect x="26" y="37.5" width="3" height="0.9"/><rect x="30" y="37.5" width="1" height="0.9"/><rect x="5" y="39.5" width="6" height="0.9"/><rect x="12" y="39.5" width="6" height="0.9"/><rect x="19" y="39.5" width="6" height="0.9"/><rect x="26" y="39.5" width="5" height="0.9"/><rect x="5" y="41.5" width="5" height="0.9"/><rect x="11" y="41.5" width="3" height="0.9"/></g></svg><div class="lbl" style="left:161px;top:143px">Музыка</div><div class="lbl" style="left:255px;top:143px">Общедоступ<br>ные</div><div class="lbl" style="left:349px;top:143px">Рабочий<br>стол</div><div class="lbl" style="left:443px;top:143px">Шаблоны</div><div class="lbl" style="left:537px;top:143px">2022-11-14-0<br>12558_1366x<br>768_scrot....</div><div class="lbl" style="left:161px;top:250px">acars</div><div class="lbl" style="left:349px;top:250px">pager</div><div class="lbl" style="left:443px;top:250px">sbd</div><div class="a" style="left:256px;top:248px;width:92px;height:34px;background:#0d1c63"></div><div class="lbl" style="left:255px;top:250px;color:#fff">output.parse<br>d</div>
  <!-- statusbar -->
  <div class="a" style="left:0;top:283px;width:719px;height:21px;background:#d9d5ce"></div>
  <div class="a" style="left:2px;top:283px;width:377px;height:20px;border:1px solid #a59f95;border-right-color:#fff;border-bottom-color:#fff"></div>
  <div class="a" style="left:382px;top:283px;width:318px;height:20px;border:1px solid #a59f95;border-right-color:#fff;border-bottom-color:#fff"></div>
  <div class="t" style="left:2px;top:285px;font-size:15.3px">"output.parsed" (41,9 МиБ) Текстовый документ</div>
  <div class="t" style="left:383px;top:285px;font-size:14.9px;transform:scaleX(0.972);transform-origin:0 0">Свободное место: 193,2 ГиБ (Всего: 219,1 ГиБ)</div>
  <svg class="a" style="left:701px;top:286px" width="17" height="17" viewBox="0 0 17 17"><path d="M16 1L1 16M16 6L6 16M16 11L11 16" stroke="#9a958c" stroke-width="1.2"/><path d="M16 2.5L2.5 16M16 7.5L7.5 16M16 12.5L12.5 16" stroke="#fff" stroke-width="1"/></svg>
  <div class="a" style="left:0;top:304px;width:719px;height:5px;background:#f1f1f1;border-top:1px solid #444"></div>
  <div class="a" style="left:24px;top:305px;width:1px;height:4px;background:#666"></div><div class="a" style="left:693px;top:305px;width:1px;height:4px;background:#666"></div>
</div>

<!-- TERMINAL -->
<div id="term" class="a">
  <div class="a" style="left:0;top:0;width:718px;height:27px;background:#3567b2;border-bottom:1px solid #3a3a3a;box-shadow:inset 1px 1px 0 #5d95dc,inset -1px -1px 0 #5d95dc"></div>
  <svg class="a" style="left:5px;top:4px" width="20" height="19" viewBox="0 0 20 19"><defs><linearGradient id="scr" x1="0" y1="0" x2="1" y2="1"><stop offset="0" stop-color="#555"/><stop offset="0.5" stop-color="#111"/><stop offset="1" stop-color="#333"/></linearGradient></defs><rect x="1" y="1" width="17" height="12" fill="url(#scr)" stroke="#bbb" stroke-width="0.8"/><rect x="7" y="13" width="5" height="3" fill="#ccc"/><rect x="4" y="16" width="11" height="2" fill="#ddd"/></svg>
  <div class="t" style="left:0;top:4px;width:718px;text-align:center;font-weight:bold;font-size:15.5px;color:#fff;transform:scaleX(1.126)">quinta@quinta-HP-EliteBook-8440p: ~</div>
  <div class="a" style="left:657px;top:15px;width:8px;height:2px;background:#fff"></div>
  <div class="a" style="left:679px;top:9px;width:9px;height:8px;border:1.5px solid #fff;border-top-width:2.5px"></div>
  <svg class="a" style="left:701px;top:9px" width="10" height="10"><path d="M1 1L9 9M9 1L1 9" stroke="#fff" stroke-width="2.2"/></svg>
  <div class="a" style="left:0;top:27px;width:718px;height:26px;background:#e8e8e7;border-bottom:1px solid #d6d6d6"></div>
  <div class="t" style="left:8px;top:31px;font-size:15.2px;color:#333">Файл</div>
  <div class="t" style="left:63px;top:31px;font-size:14.8px;color:#333">Правка</div>
  <div class="t" style="left:130px;top:31px;font-size:15.2px;color:#333">Вкладки</div>
  <div class="t" style="left:206px;top:31px;font-size:14.6px;color:#333">Справка</div>
  <div class="a" style="left:0;top:53px;width:706px;height:359px;background:#000"></div>
  <pre class="a mono" style="left:1px;top:55px;margin:0"><span class="g">quinta@quinta-HP-EliteBook-8440p</span>:<span class="bl">~</span>$ pypy /usr/src/iridium-toolkit/reassembler.py -i /hom
e/quinta/output.parsed -m page &gt; /home/quinta/pager
Couldn&#x27;t parse input line:  ERR:  ERR:Message: Couldn&#x27;t parse: linux; GNU C++ version 7.
3.0; Boost_106501; UHD_003.010.003.000-0-unknown
Couldn&#x27;t parse input line:  ERR:  ERR:Message: Couldn&#x27;t parse:
Couldn&#x27;t parse input line:  ERR:  ERR:Message: Couldn&#x27;t parse: -- Using format CF32.
Couldn&#x27;t parse input line:  IMS: i-16682950<span class="g">quinta@quinta-HP-EliteBook-8440p</span>:<span class="bl">~</span>$ p -i /hom
e/quinta/output.parsed -m sbd &gt; /home/quinta/sbd
Traceback (most recent call last):
  File &quot;/usr/src/iridium-toolkit/reassembler.py&quot;, line 403, in &lt;module&gt;
    zx.run(fileinput.input(ifile))
AttributeError: &#x27;NoneType&#x27; object has no attribute &#x27;run&#x27;
<span class="g">quinta@quinta-HP-EliteBook-8440p</span>:<span class="bl">~</span>$ /usr/src/iridium-toolkit/stats-voc.py /home/quinta/o
utput.parsed
272</pre>
  <div class="a" style="left:1px;top:310px;width:10px;height:16px;background:#bdbdbd"></div>
  <div class="a" style="left:706px;top:53px;width:12px;height:359px;background:#d2d2d2;border-left:1px solid #b0b0b0"></div>
  <div class="a" style="left:709px;top:57px;width:7px;height:352px;background:#7c7c7c;border-radius:4px"></div>
  <div class="a" style="left:0;top:412px;width:718px;height:5px;background:#f0f0f0;border-top:1px solid #555"></div>
  <div class="a" style="left:25px;top:413px;width:1px;height:4px;background:#555"></div>
</div>

<!-- FIGURE -->
<div id="fig" class="a">
  <div class="a" style="left:0;top:0;width:640px;height:27px;background:linear-gradient(#e4e4e4,#eeeeee);border-bottom:1px solid #444;border-top:1px solid #fafafa;border-left:1px solid #fafafa"></div>
  <svg class="a" style="left:4px;top:4px" width="20" height="18" viewBox="0 0 20 18"><defs><linearGradient id="wgr" x1="0" y1="0" x2="0" y2="1"><stop offset="0" stop-color="#f4f4f4"/><stop offset="1" stop-color="#c8c8c8"/></linearGradient></defs><rect x="1" y="1" width="18" height="16" fill="url(#wgr)" stroke="#6a8cc0" stroke-width="0.8"/><rect x="1" y="1" width="18" height="4" fill="#4a7cc4"/><rect x="1" y="16" width="18" height="1.2" fill="#4a7cc4"/></svg>
  <div class="t" style="left:0;top:4px;width:640px;text-align:center;font-weight:bold;font-size:15.5px;color:#858583;transform:scaleX(1.12)">Figure 1</div>
  <div class="a" style="left:578px;top:15px;width:9px;height:2px;background:#767672"></div>
  <div class="a" style="left:600px;top:9px;width:9px;height:9px;border:1.5px solid #767672;border-top-width:2px"></div>
  <svg class="a" style="left:622px;top:9px" width="10" height="10"><path d="M1.8 1.8L8.2 8.2M8.2 1.8L1.8 8.2" stroke="#767672" stroke-width="2.6"/></svg>
  <svg class="a" style="left:0;top:0" width="639" height="100"><text x="0" y="76" font-family="Liberation Sans" font-size="16.5" textLength="638" lengthAdjust="spacingAndGlyphs">ce rigth to define an area. The script will try to play iridium using the play-iri</text></svg>
  <svg class="a" style="left:0;top:0" width="639" height="546" font-family="Liberation Sans" font-size="14.5" fill="#000">
    <rect x="80.5" y="85.5" width="496" height="369" fill="none" stroke="#000" stroke-width="1.2"/>
    <g stroke="#000" stroke-width="1"><line x1="75" y1="94.5" x2="80.5" y2="94.5"/><line x1="75" y1="145.5" x2="80.5" y2="145.5"/><line x1="75" y1="196.5" x2="80.5" y2="196.5"/><line x1="75" y1="247.5" x2="80.5" y2="247.5"/><line x1="75" y1="298.5" x2="80.5" y2="298.5"/><line x1="75" y1="349.5" x2="80.5" y2="349.5"/><line x1="75" y1="400.5" x2="80.5" y2="400.5"/><line x1="75" y1="451.5" x2="80.5" y2="451.5"/><line x1="85.7" y1="454.5" x2="85.7" y2="460"/><line x1="150.1" y1="454.5" x2="150.1" y2="460"/><line x1="214.4" y1="454.5" x2="214.4" y2="460"/><line x1="278.8" y1="454.5" x2="278.8" y2="460"/><line x1="343.2" y1="454.5" x2="343.2" y2="460"/><line x1="407.6" y1="454.5" x2="407.6" y2="460"/><line x1="471.9" y1="454.5" x2="471.9" y2="460"/><line x1="536.3" y1="454.5" x2="536.3" y2="460"/></g><g stroke="none"><text x="9.5" y="99.7" textLength="60" lengthAdjust="spacingAndGlyphs">1626000</text><text x="9.5" y="150.7" textLength="60" lengthAdjust="spacingAndGlyphs">1625000</text><text x="9.5" y="201.7" textLength="60" lengthAdjust="spacingAndGlyphs">1624000</text><text x="9.5" y="252.7" textLength="60" lengthAdjust="spacingAndGlyphs">1623000</text><text x="9.5" y="303.7" textLength="60" lengthAdjust="spacingAndGlyphs">1622000</text><text x="9.5" y="354.7" textLength="60" lengthAdjust="spacingAndGlyphs">1621000</text><text x="9.5" y="405.7" textLength="60" lengthAdjust="spacingAndGlyphs">1620000</text><text x="9.5" y="456.7" textLength="60" lengthAdjust="spacingAndGlyphs">1619000</text><text x="81.5" y="474.6" textLength="8.5" lengthAdjust="spacingAndGlyphs">0</text><text x="129.1" y="474.6" textLength="42" lengthAdjust="spacingAndGlyphs">10000</text><text x="193.4" y="474.6" textLength="42" lengthAdjust="spacingAndGlyphs">20000</text><text x="257.8" y="474.6" textLength="42" lengthAdjust="spacingAndGlyphs">30000</text><text x="322.2" y="474.6" textLength="42" lengthAdjust="spacingAndGlyphs">40000</text><text x="386.6" y="474.6" textLength="42" lengthAdjust="spacingAndGlyphs">50000</text><text x="450.9" y="474.6" textLength="42" lengthAdjust="spacingAndGlyphs">60000</text><text x="515.3" y="474.6" textLength="42" lengthAdjust="spacingAndGlyphs">70000</text></g>
    <g fill="#ff0000" stroke="none"><circle cx="102.4" cy="214.3" r="4.8"/><circle cx="292.1" cy="155.5" r="4.8"/><circle cx="292.1" cy="158.4" r="4.8"/><circle cx="296.2" cy="175.3" r="4.8"/><circle cx="306.2" cy="172.2" r="4.8"/><circle cx="292.0" cy="192.4" r="4.8"/><circle cx="299.0" cy="189.2" r="4.8"/><circle cx="340.0" cy="206.5" r="4.8"/><circle cx="252.5" cy="258.6" r="4.8"/><circle cx="248.3" cy="275.3" r="4.8"/><circle cx="252.0" cy="279.5" r="4.8"/><circle cx="361.4" cy="121.7" r="4.8"/><circle cx="405.0" cy="244.3" r="4.8"/><circle cx="538.5" cy="101.0" r="4.8"/><circle cx="553.4" cy="117.1" r="4.8"/><circle cx="538.4" cy="437.0" r="4.8"/></g>
  </svg>
  <div class="a" style="left:0;top:507px;width:640px;height:35px;background:#d9d9d9"></div><div class="a" style="left:3px;top:510px;width:28px;height:28px;background:#f2f2f2;border:1px solid #fff;border-right:2px solid #8a8a8a;border-bottom:2px solid #8a8a8a"></div><svg class="a" style="left:3px;top:510px" width="28" height="28" viewBox="0 0 28 28"><path d="M4 16.6L14.2 8.4L24 16.6" stroke="#000" stroke-width="2.4" fill="none" stroke-linecap="round" stroke-linejoin="round"/><path d="M7 16.2L14.2 10.9L21.4 16.2V23.8H16.2V19H12V23.8H7z" fill="#000"/><rect x="18.3" y="8" width="3.1" height="5" fill="#000"/></svg><div class="a" style="left:33px;top:510px;width:28px;height:28px;background:#f2f2f2;border:1px solid #fff;border-right:2px solid #8a8a8a;border-bottom:2px solid #8a8a8a"></div><svg class="a" style="left:33px;top:510px" width="28" height="28" viewBox="0 0 28 28"><path d="M14.8 6.4L6.4 14.2L14.8 22.2M6.8 14.2H21.8" stroke="#000" stroke-width="5" fill="none" stroke-linecap="round" stroke-linejoin="round"/></svg><div class="a" style="left:63px;top:510px;width:28px;height:28px;background:#f2f2f2;border:1px solid #fff;border-right:2px solid #8a8a8a;border-bottom:2px solid #8a8a8a"></div><svg class="a" style="left:63px;top:510px" width="28" height="28" viewBox="0 0 28 28"><path d="M13.2 6.4L21.4 14.2L13.2 22.2M6 14.2H21" stroke="#000" stroke-width="5" fill="none" stroke-linecap="round" stroke-linejoin="round"/></svg><div class="a" style="left:104px;top:510px;width:28px;height:28px;background:#f2f2f2;border:1px solid #fff;border-right:2px solid #8a8a8a;border-bottom:2px solid #8a8a8a"></div><svg class="a" style="left:104px;top:510px" width="28" height="28" viewBox="0 0 28 28"><path d="M14 5V23.5M4.5 14.2H23.5" stroke="#000" stroke-width="3.2"/><path d="M14 2.9L10.3 7.2H17.7zM14 25.5L10.3 21.2H17.7zM2.9 14.2L7.2 10.5V17.9zM25.1 14.2L20.8 10.5V17.9z" fill="#000" stroke="#000" stroke-width="1.2" stroke-linejoin="round"/></svg><div class="a" style="left:135px;top:510px;width:28px;height:28px;background:#f2f2f2;border:1px solid #fff;border-right:2px solid #8a8a8a;border-bottom:2px solid #8a8a8a"></div><svg class="a" style="left:135px;top:510px" width="28" height="28" viewBox="0 0 28 28"><circle cx="12.4" cy="12.6" r="7.4" stroke="#000" stroke-width="2.8" fill="none"/><path d="M17.6 17.8L22.4 22.6" stroke="#000" stroke-width="3" stroke-linecap="round"/></svg><div class="a" style="left:165px;top:510px;width:28px;height:28px;background:#f2f2f2;border:1px solid #fff;border-right:2px solid #8a8a8a;border-bottom:2px solid #8a8a8a"></div><svg class="a" style="left:165px;top:510px" width="28" height="28" viewBox="0 0 28 28"><path d="M3.9 8.3H23.2M3.9 14.7H23.2M3.9 21.1H23.2" stroke="#000" stroke-width="1.9" stroke-linecap="round"/><rect x="7.2" y="6.1" width="4.2" height="4.4" rx="0.6" fill="#000"/><rect x="15" y="12.5" width="4.2" height="4.4" rx="0.6" fill="#000"/><rect x="9.1" y="18.9" width="4.2" height="4.4" rx="0.6" fill="#000"/></svg><div class="a" style="left:205px;top:510px;width:28px;height:28px;background:#f2f2f2;border:1px solid #fff;border-right:2px solid #8a8a8a;border-bottom:2px solid #8a8a8a"></div><svg class="a" style="left:205px;top:510px" width="28" height="28" viewBox="0 0 28 28"><path d="M5 6H19L23.4 10.4V22.5H5z" fill="none" stroke="#000" stroke-width="2.3" stroke-linejoin="round"/><path d="M7.6 5.5H16.4V11.4H7.6z" fill="#000"/><rect x="12.2" y="6.6" width="2.4" height="3.6" fill="#fff"/><rect x="8.5" y="15.8" width="11.2" height="6.4" fill="none" stroke="#000" stroke-width="2"/></svg><div class="a" style="left:98px;top:512px;width:1px;height:24px;background:#aaa"></div><div class="a" style="left:198px;top:512px;width:1px;height:24px;background:#aaa"></div><div class="a" style="left:0;top:541px;width:639px;height:4px;background:#f0f0f0;border-top:1px solid #555"></div>
  <div class="a" style="left:24px;top:542px;width:1px;height:3px;background:#777"></div>
  <div class="a" style="left:614px;top:542px;width:1px;height:3px;background:#777"></div>
</div>

<!-- TASKBAR -->
<div id="task" class="a">
  <div class="a" style="left:0;top:0;width:1366px;height:1px;background:#f6f5f3"></div>
  <div class="a" style="left:0;top:0;width:63px;height:32px;background:linear-gradient(#a6d4fa,#6aa6d8 40%,#2a68a0 80%,#1f5a8e)"></div>
  <svg class="a" style="left:16px;top:1px" width="31" height="31" viewBox="0 0 31 31"><defs><linearGradient id="lx" x1="0.3" y1="0" x2="0.6" y2="1"><stop offset="0" stop-color="#f4f8fc"/><stop offset="0.5" stop-color="#c4d8ea"/><stop offset="1" stop-color="#5a8ab4"/></linearGradient></defs><circle cx="15.5" cy="15.5" r="13.8" fill="url(#lx)"/><path d="M3 15A13 13 0 0 1 28 13" stroke="#3a5a7a" stroke-width="1" fill="none" opacity="0.8"/><path d="M2 16C8 12 14 8 17 6L20 6L18 9C22 14 23 20 23 26C20 20 17 14 15 13C11 16 7 22 5 26L4 25C6 20 8 18 10 16C7 15 4 16 2 16z" fill="#4f86b8"/><path d="M2 16C6 14 10 14 12 15M10 16C7 19 5 23 5 26M15 13C12 15 8 22 7 25M15 13C19 16 22 21 23 26" stroke="#2a4a6a" stroke-width="0.9" fill="none"/></svg>
  <svg class="a" style="left:76px;top:1px" width="30" height="31" viewBox="0 0 30 31"><defs><linearGradient id="cab" x1="0" y1="0" x2="0" y2="1"><stop offset="0" stop-color="#d8d8d8"/><stop offset="0.5" stop-color="#b4b4b4"/><stop offset="1" stop-color="#9a9a9a"/></linearGradient><linearGradient id="cabtop" x1="0" y1="0" x2="0" y2="1"><stop offset="0" stop-color="#f0f0f0"/><stop offset="1" stop-color="#c8c8c8"/></linearGradient></defs><rect x="1" y="0.5" width="28" height="29.5" rx="1.5" fill="url(#cab)" stroke="#8a8a8a" stroke-width="0.8"/><rect x="1.5" y="1" width="27" height="4.5" fill="url(#cabtop)"/><rect x="3" y="5.5" width="24" height="7" fill="#1a1a1a"/><rect x="4" y="7" width="22" height="2.2" fill="#e89040"/><rect x="4" y="9" width="22" height="1.2" fill="#fff4e0"/><rect x="4" y="10.2" width="22" height="2" fill="#d86a28"/><rect x="10" y="19" width="10" height="6" rx="1.2" fill="#d0d0d0" stroke="#7a7a7a" stroke-width="0.9"/><rect x="12" y="21" width="6" height="2" fill="#fff"/></svg>
  <svg class="a" style="left:112px;top:1px" width="32" height="32" viewBox="0 0 32 32"><defs><radialGradient id="glb" cx="0.45" cy="0.35" r="0.7"><stop offset="0" stop-color="#8ab4e4"/><stop offset="0.7" stop-color="#4a7cc0"/><stop offset="1" stop-color="#2a5a9a"/></radialGradient></defs><circle cx="14.2" cy="15.4" r="13.6" fill="url(#glb)"/><path d="M4 11C6 8 9 6 12 5C11 8 8 10 6 12zM19 4C23 5 26 8 27 11C25 12 22 10 21 13C19 14 17 12 16 15C14 13 17 11 18 9C16 8 18 6 19 4zM6 17C9 16 11 19 12 21C11 24 9 26 8 28C7 25 8 22 6 20zM20 16C22 17 24 19 23 22L21 24C20 21 19 19 20 16z" fill="#1f4a7e" opacity="0.85"/><path d="M17.5 15L17.5 29.5L21 26L23.6 31.5L26 30.4L23.4 25L28.5 25z" fill="#f8f8f8" stroke="#6a6a6a" stroke-width="0.7"/></svg>
<div class="a" style="left:149px;top:0px;width:138px;height:32px;background:#d6d2cb;border:1px solid #fff;border-right:2px solid #6e6a64;border-bottom:2px solid #6e6a64"></div><svg class="a" style="left:151px;top:1px" width="28" height="30" viewBox="0 0 28 30"><defs><radialGradient id="ffx" cx="0.65" cy="0.25" r="0.9"><stop offset="0" stop-color="#fff44a"/><stop offset="0.35" stop-color="#ffa42a"/><stop offset="0.7" stop-color="#ff5a36"/><stop offset="1" stop-color="#e8207a"/></radialGradient><radialGradient id="ffg" cx="0.4" cy="0.3" r="0.8"><stop offset="0" stop-color="#b84ae8"/><stop offset="1" stop-color="#5a2ad0"/></radialGradient></defs><path d="M14 28C7 28 2 22.5 2 16C2 12 3.5 9 6 7C6 9 7 10 8 10.5C9.5 8 12 7 14 7C13 5 14.5 2.5 16.5 1C17 4 20 5 22.5 7.5C25 10 26 13 26 16C26 22.5 21 28 14 28z" fill="url(#ffx)"/><circle cx="14.5" cy="17" r="6.3" fill="url(#ffg)"/><path d="M8 12C10 10.5 13 10.5 15 12C12 12 10 13 9 15z" fill="#ffb42a"/></svg><div class="t" style="left:181px;top:8px;font-size:15.5px;color:#000">[Iridium ACA...</div><div class="a" style="left:289px;top:0px;width:138px;height:32px;background:repeating-conic-gradient(#d4d0ca 0 25%,#fbfbfa 0 50%) 0 0/2px 2px;border:1px solid #555;border-right-color:#fff;border-bottom-color:#fff;border-left-width:2px;border-top-width:2px"></div><svg class="a" style="left:294px;top:5px" width="24" height="24" viewBox="0 0 24 24"><defs><linearGradient id="scr2" x1="0" y1="0" x2="1" y2="1"><stop offset="0" stop-color="#555"/><stop offset="0.5" stop-color="#0a0a0a"/><stop offset="1" stop-color="#333"/></linearGradient></defs><rect x="1" y="1" width="22" height="15" fill="url(#scr2)" stroke="#999" stroke-width="0.6"/><rect x="9" y="16" width="6" height="3" fill="#bbb"/><rect x="5" y="19" width="14" height="2" fill="#ddd"/></svg><div class="t" style="left:321px;top:8px;font-size:15.5px;color:#000">(2) Lxterminal</div><div class="a" style="left:429px;top:0px;width:138px;height:32px;background:#d6d2cb;border:1px solid #fff;border-right:2px solid #6e6a64;border-bottom:2px solid #6e6a64"></div><svg class="a" style="left:432px;top:4px" width="28" height="27" viewBox="0 0 28 27"><path d="M1 2h10l2 2h12v6H1z" fill="#f4f4f4" stroke="#c0c0c0" stroke-width="0.8"/><rect x="2" y="7" width="24" height="19" rx="1" fill="url(#fbody)"/></svg><div class="t" style="left:460px;top:8px;font-size:15.5px;color:#000">quinta</div><div class="a" style="left:569px;top:0px;width:138px;height:32px;background:#d6d2cb;border:1px solid #fff;border-right:2px solid #6e6a64;border-bottom:2px solid #6e6a64"></div><svg class="a" style="left:571px;top:3px" width="30" height="28" viewBox="0 0 30 28"><path d="M3 26C1 16 6 4 22 2C28 1 28 1 28 1C27 12 22 25 6 25z" fill="#8fd04a" stroke="#5da022" stroke-width="1.2"/><path d="M10 21L26 8" stroke="#2a6ad0" stroke-width="3"/><path d="M9 22L11 19" stroke="#f0a020" stroke-width="2"/></svg><div class="t" style="left:600px;top:8px;font-size:16px;color:#000">[iridium]</div><div class="a" style="left:709px;top:0px;width:138px;height:32px;background:#d6d2cb;border:1px solid #fff;border-right:2px solid #6e6a64;border-bottom:2px solid #6e6a64"></div><svg class="a" style="left:712px;top:6px" width="26" height="22" viewBox="0 0 26 22"><defs><linearGradient id="wgr2" x1="0" y1="0" x2="0" y2="1"><stop offset="0" stop-color="#f4f4f4"/><stop offset="1" stop-color="#c4c4c4"/></linearGradient></defs><rect x="1" y="1" width="24" height="20" fill="url(#wgr2)" stroke="#6a8cc0" stroke-width="0.8"/><rect x="1" y="1" width="24" height="5" fill="#4a7cc4"/><rect x="1" y="19.8" width="24" height="1.4" fill="#4a7cc4"/></svg><div class="t" style="left:740px;top:8px;font-size:14.6px;color:#000">Figure 1</div>
  
  <svg class="a" style="left:858px;top:4px" width="30" height="26" viewBox="0 0 30 26"><rect x="7" y="7" width="21" height="18" rx="2" fill="#e8e8e8" stroke="#9a9a9a"/><rect x="2" y="2" width="20" height="17" rx="2" fill="#efefef" stroke="#9a9a9a"/><rect x="2" y="2" width="20" height="3" fill="#6a9ad8"/></svg>
  <div class="a" style="left:894px;top:2px;width:199px;height:28px;background:#9b9388"></div>
  <div class="a" style="left:943px;top:2px;width:1px;height:28px;background:#d6d2cb"></div>
  <div class="a" style="left:993px;top:2px;width:1px;height:28px;background:#d6d2cb"></div>
  <div class="a" style="left:1043px;top:2px;width:1px;height:28px;background:#d6d2cb"></div>
  <div class="a" style="left:894px;top:2px;width:49px;height:28px;background:#0f1b4e"></div>
  <div class="a" style="left:895px;top:3px;width:25px;height:10px;background:#0b1f6e;border:1px solid #fff"></div>
  <div class="a" style="left:894px;top:14px;width:26px;height:15px;background:#0024a0;border:1px solid #fff"></div>
  <div class="a" style="left:921px;top:3px;width:22px;height:19px;background:#0b1f6e;border:1px solid #fff"></div>
  <div class="a" style="left:924px;top:6px;width:16px;height:13px;background:linear-gradient(#6a9ad8 0 3px,#eee 3px,#bbb)"></div>
  <svg class="a" style="left:1109px;top:0px" width="34" height="32" viewBox="0 0 34 32"><path d="M1.5 1.5H32.5V30.5H12C10.5 26 7 23 1.5 20z" fill="#f6e28c" stroke="#3a3a30" stroke-width="1"/><path d="M1.5 20C6 19.5 10 20 12 24V30.5C10 26 6 22 1.5 20z" fill="#c8a850" stroke="#3a3a30" stroke-width="0.8"/></svg>
  <svg class="a" style="left:1145px;top:1px" width="34" height="32" viewBox="0 0 34 32"><defs><linearGradient id="bat" x1="0" y1="0" x2="1" y2="0"><stop offset="0" stop-color="#5aa83a"/><stop offset="0.5" stop-color="#b8e890"/><stop offset="1" stop-color="#4a9830"/></linearGradient></defs><rect x="4" y="1" width="6" height="3" fill="#888"/><rect x="2" y="3" width="10" height="27" rx="2" fill="url(#bat)" stroke="#777"/><path d="M14 12C18 8 26 8 26 14L22 19" stroke="#333" stroke-width="2" fill="none"/><rect x="16" y="19" width="12" height="8" rx="1" fill="#444"/><rect x="18" y="27" width="2" height="4" fill="#444"/><rect x="24" y="27" width="2" height="4" fill="#444"/></svg>
  <div class="a" style="left:1179px;top:0px;width:64px;height:32px;background:#dcd8d2;border-left:1px solid #fff;border-top:1px solid #fff;border-right:1px solid #b0aba3"></div>
  <svg class="a" style="left:1186px;top:9px" width="18" height="16" viewBox="0 0 18 16"><path d="M2 6C6 1.5 12 1.5 16 6" stroke="#b0aca6" stroke-width="1.6" fill="none"/><path d="M4.5 9C7 6.5 11 6.5 13.5 9" stroke="#a6a29c" stroke-width="1.6" fill="none"/><circle cx="9" cy="12.5" r="1.6" fill="#8c8882"/></svg>
  <svg class="a" style="left:1218px;top:8px" width="18" height="18" viewBox="0 0 18 18"><path d="M1 7H4L8 4V14L4 11H1z" fill="#8c8882"/><rect x="11" y="6" width="1.6" height="6" fill="#8c8882"/><rect x="14" y="2" width="1.6" height="14" fill="#8c8882"/></svg>
  <svg class="a" style="left:1245px;top:5px" width="39" height="22" viewBox="0 0 39 22"><rect width="39" height="22" fill="#f4f4f4"/><rect y="0.00" width="39" height="1.69" fill="#d42a3c"/><rect y="3.38" width="39" height="1.69" fill="#d42a3c"/><rect y="6.77" width="39" height="1.69" fill="#d42a3c"/><rect y="10.15" width="39" height="1.69" fill="#d42a3c"/><rect y="13.54" width="39" height="1.69" fill="#d42a3c"/><rect y="16.92" width="39" height="1.69" fill="#d42a3c"/><rect y="20.31" width="39" height="1.69" fill="#d42a3c"/><rect width="17" height="12" fill="#2a3a8a"/><g fill="#fff"><circle cx="1.5" cy="1.3" r="0.45"/><circle cx="4.3" cy="1.3" r="0.45"/><circle cx="7.1" cy="1.3" r="0.45"/><circle cx="9.9" cy="1.3" r="0.45"/><circle cx="12.7" cy="1.3" r="0.45"/><circle cx="2.9" cy="3.2" r="0.45"/><circle cx="5.7" cy="3.2" r="0.45"/><circle cx="8.5" cy="3.2" r="0.45"/><circle cx="11.3" cy="3.2" r="0.45"/><circle cx="14.1" cy="3.2" r="0.45"/><circle cx="1.5" cy="5.1" r="0.45"/><circle cx="4.3" cy="5.1" r="0.45"/><circle cx="7.1" cy="5.1" r="0.45"/><circle cx="9.9" cy="5.1" r="0.45"/><circle cx="12.7" cy="5.1" r="0.45"/><circle cx="2.9" cy="7.0" r="0.45"/><circle cx="5.7" cy="7.0" r="0.45"/><circle cx="8.5" cy="7.0" r="0.45"/><circle cx="11.3" cy="7.0" r="0.45"/><circle cx="14.1" cy="7.0" r="0.45"/><circle cx="1.5" cy="8.9" r="0.45"/><circle cx="4.3" cy="8.9" r="0.45"/><circle cx="7.1" cy="8.9" r="0.45"/><circle cx="9.9" cy="8.9" r="0.45"/><circle cx="12.7" cy="8.9" r="0.45"/><circle cx="2.9" cy="10.8" r="0.45"/><circle cx="5.7" cy="10.8" r="0.45"/><circle cx="8.5" cy="10.8" r="0.45"/><circle cx="11.3" cy="10.8" r="0.45"/><circle cx="14.1" cy="10.8" r="0.45"/></g></svg>
  <div class="t" style="left:1290px;top:8px;font-size:16px;color:#000;transform:scaleX(0.95);transform-origin:0 0">01:29</div>
  <svg class="a" style="left:1334px;top:3px" width="28" height="28" viewBox="0 0 28 28"><path d="M8 6.5A10.5 10.5 0 1 0 20 6.5" stroke="#333" stroke-width="3.4" fill="none"/><path d="M14 2V13" stroke="#333" stroke-width="3.4"/></svg>
</div>
</body></html>
